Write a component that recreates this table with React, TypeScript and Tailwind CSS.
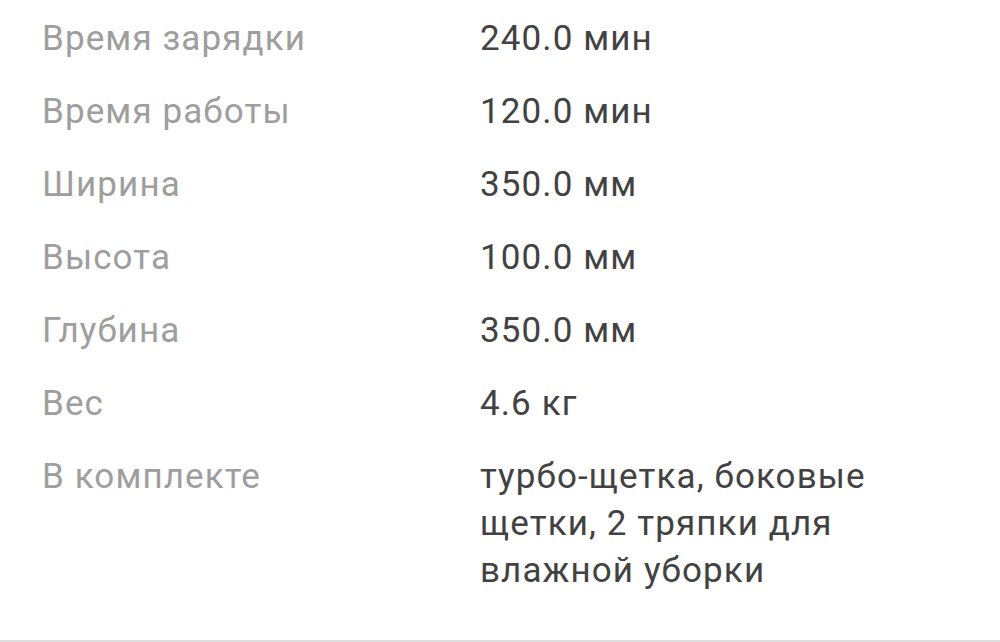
import React from "react";

const rows: [string, string][] = [
  ["Время зарядки", "240.0 мин"],
  ["Время работы", "120.0 мин"],
  ["Ширина", "350.0 мм"],
  ["Высота", "100.0 мм"],
  ["Глубина", "350.0 мм"],
  ["Вес", "4.6 кг"],
  ["В комплекте", "турбо-щетка, боковые щетки, 2 тряпки для влажной уборки"],
];

export default function App() {
  return (
    <div className="w-[1000px] h-[642px] bg-white flex flex-col" style={{ fontFamily: "Roboto, 'Noto Sans', sans-serif" }}>
      <div className="flex-1 flex flex-col gap-[26px] pt-[15px] pl-[42px]">
        {rows.map(([k, v]) => (
          <div key={k} className="flex text-[35px] leading-[47px] tracking-[1.1px]">
            <div className="w-[438px] text-[#9e9e9e]">{k}</div>
            <div className="w-[430px] text-[#424242]">{v}</div>
          </div>
        ))}
      </div>
      <div className="h-[2px] bg-[#dddddd]" />
    </div>
  );
}
